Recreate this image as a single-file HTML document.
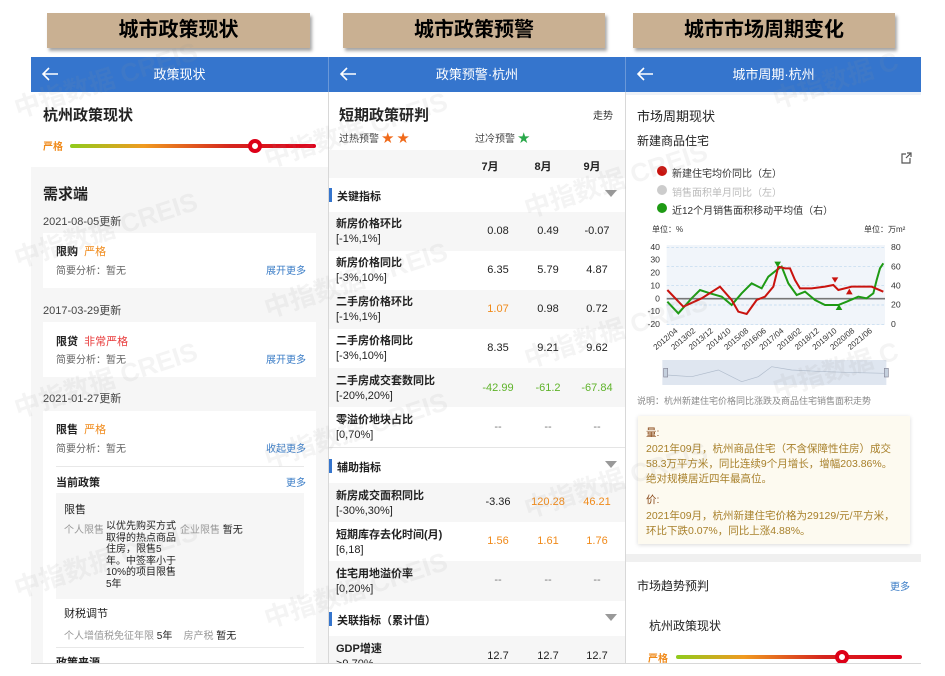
<!DOCTYPE html>
<html><head><meta charset="utf-8"><style>
*{margin:0;padding:0;box-sizing:border-box}
body{width:945px;height:676px;background:#fff;position:relative;overflow:hidden;font-family:"Liberation Sans","Noto Sans CJK SC",sans-serif;color:#222}
.a{position:absolute;white-space:nowrap}
.tag{position:absolute;top:13px;height:35px;background:#c9b092;box-shadow:2px 3px 3px rgba(0,0,0,.35);font-size:20px;font-weight:bold;text-align:center;line-height:35px;color:#000}
.hdr{position:absolute;top:57px;height:35px;background:#3575cd;color:#fff;font-size:13px;text-align:center;line-height:35px}
.arr{position:absolute;left:10px;top:9px}
.g{background:#f6f6f6}
.w{background:#fff}
.c{position:absolute;text-align:center;width:60px;font-size:11px}
.lab{position:absolute;left:7px;font-size:11px;line-height:15px;color:#222}
.lab b{font-weight:bold}
.sec{position:absolute;left:0;width:296px;height:34px;background:#fff}
.sec span{position:absolute;left:8px;top:10px;font-size:11px;font-weight:bold}
.sec i{position:absolute;left:0;top:10px;width:3px;height:14px;background:#3575cd}
.sec em{position:absolute;right:8px;top:12px;border-left:6px solid transparent;border-right:6px solid transparent;border-top:7px solid #999}
.wm{position:absolute;font-size:26px;font-weight:bold;color:rgba(150,150,150,.10);transform:rotate(-18deg);white-space:nowrap}
</style></head><body>

<div class="tag" style="left:47px;width:263px">城市政策现状</div>
<div class="tag" style="left:343px;width:262px">城市政策预警</div>
<div class="tag" style="left:633px;width:262px">城市市场周期变化</div>

<div class="a" style="left:31px;top:57px;width:890px;height:607px;border:1px solid #d8d8d8;border-top:none"></div>

<!-- LEFT PANEL -->
<div class="a" style="left:31px;top:92px;width:297px;height:571px;background:#f6f6f6;overflow:hidden">
  <div class="a" style="left:0;top:0;width:297px;height:75px;background:#fff"></div>
  <div class="a" style="left:12px;top:12px;font-size:15px;font-weight:bold">杭州政策现状</div>
  <div class="a" style="left:12px;top:46px;font-size:10px;color:#f08a1a;font-weight:bold">严格</div>
  <div class="a" style="left:39px;top:52px;width:246px;height:4px;border-radius:2px;background:linear-gradient(90deg,#8fcb1c,#f09a20 30%,#d5261e 65%,#e0001a)"></div>
  <div class="a" style="left:217px;top:47px;width:14px;height:14px;border-radius:50%;background:#fff;border:4px solid #dd0018"></div>
  <div class="a" style="left:12px;top:91px;font-size:15px;font-weight:bold">需求端</div>
  <div class="a" style="left:12px;top:121px;font-size:11px;color:#444">2021-08-05更新</div>
  <div class="a" style="left:12px;top:141px;width:273px;height:55px;background:#fff"></div>
  <div class="a" style="left:25px;top:151px;font-size:11px;font-weight:bold">限购 <span style="color:#f08a1a;font-weight:normal">&nbsp;严格</span></div>
  <div class="a" style="left:25px;top:170px;font-size:10px;color:#666">简要分析：暂无</div>
  <div class="a" style="left:235px;top:170px;font-size:10px;color:#3a7cc6">展开更多</div>
  <div class="a" style="left:12px;top:210px;font-size:11px;color:#444">2017-03-29更新</div>
  <div class="a" style="left:12px;top:230px;width:273px;height:55px;background:#fff"></div>
  <div class="a" style="left:25px;top:241px;font-size:11px;font-weight:bold">限贷 <span style="color:#e83a3a;font-weight:normal">&nbsp;非常严格</span></div>
  <div class="a" style="left:25px;top:259px;font-size:10px;color:#666">简要分析：暂无</div>
  <div class="a" style="left:235px;top:259px;font-size:10px;color:#3a7cc6">展开更多</div>
  <div class="a" style="left:12px;top:298px;font-size:11px;color:#444">2021-01-27更新</div>
  <div class="a" style="left:12px;top:319px;width:273px;height:260px;background:#fff"></div>
  <div class="a" style="left:25px;top:329px;font-size:11px;font-weight:bold">限售 <span style="color:#f08a1a;font-weight:normal">&nbsp;严格</span></div>
  <div class="a" style="left:25px;top:348px;font-size:10px;color:#666">简要分析：暂无</div>
  <div class="a" style="left:235px;top:348px;font-size:10px;color:#3a7cc6">收起更多</div>
  <div class="a" style="left:25px;top:374px;width:248px;height:1px;background:#e8e8e8"></div>
  <div class="a" style="left:25px;top:382px;font-size:11px;font-weight:bold">当前政策</div>
  <div class="a" style="left:255px;top:382px;font-size:10px;color:#3a7cc6">更多</div>
  <div class="a" style="left:25px;top:401px;width:248px;height:106px;background:#f6f6f6"></div>
  <div class="a" style="left:33px;top:409px;font-size:11px">限售</div>
  <div class="a" style="left:33px;top:429px;font-size:10px;color:#999">个人限售</div>
  <div class="a" style="left:75px;top:429px;font-size:10px;line-height:11.5px;color:#222;white-space:normal;width:72px">以优先购买方式取得的热点商品住房，限售5年。中签率小于10%的项目限售5年</div>
  <div class="a" style="left:149px;top:429px;font-size:10px;color:#999">企业限售 <span style="color:#222">暂无</span></div>
  <div class="a" style="left:33px;top:513px;font-size:11px">财税调节</div>
  <div class="a" style="left:33px;top:535px;font-size:10px;color:#999">个人增值税免征年限 <span style="color:#222">5年</span> &nbsp;&nbsp;&nbsp;房产税 <span style="color:#222">暂无</span></div>
  <div class="a" style="left:25px;top:555px;width:248px;height:1px;background:#e8e8e8"></div>
  <div class="a" style="left:25px;top:562px;font-size:11px;font-weight:bold">政策来源</div>
</div>
<div class="hdr" style="left:31px;width:297px">政策现状<svg class="arr" width="18" height="16" viewBox="0 0 18 16"><path d="M17 8H2M8 2L2 8L8 14" fill="none" stroke="#fff" stroke-width="1.6"/></svg></div>

<!-- MIDDLE PANEL -->
<div class="a" style="left:328px;top:92px;width:297px;height:571px;background:#fff;overflow:hidden;border-left:1px solid #d8d8d8">
  <div class="a" style="left:10px;top:12px;font-size:15px;font-weight:bold">短期政策研判</div>
  <div class="a" style="left:264px;top:15px;font-size:10px;color:#333">走势</div>
  <div class="a" style="left:10px;top:37px;font-size:10px;color:#444">过热预警 <span style="color:#f06a1a;font-size:12px">★ ★</span></div>
  <div class="a" style="left:146px;top:37px;font-size:10px;color:#444">过冷预警 <span style="color:#2aa84a;font-size:12px">★</span></div>
  <div class="a g" style="left:0;top:58px;width:297px;height:28px"></div>
  <div class="c" style="left:131px;top:66px;font-weight:bold">7月</div>
  <div class="c" style="left:184px;top:66px;font-weight:bold">8月</div>
  <div class="c" style="left:233px;top:66px;font-weight:bold">9月</div>
  <div class="sec" style="top:86px"><i></i><span>关键指标</span><em></em></div>

  <div class="a g" style="left:0;top:120px;width:297px;height:39px"></div>
  <div class="lab" style="top:125px"><b>新房价格环比</b><br>[-1%,1%]</div>
  <div class="c" style="left:139px;top:133px">0.08</div><div class="c" style="left:189px;top:133px">0.49</div><div class="c" style="left:238px;top:133px">-0.07</div>

  <div class="a w" style="left:0;top:159px;width:297px;height:39px"></div>
  <div class="lab" style="top:164px"><b>新房价格同比</b><br>[-3%,10%]</div>
  <div class="c" style="left:139px;top:172px">6.35</div><div class="c" style="left:189px;top:172px">5.79</div><div class="c" style="left:238px;top:172px">4.87</div>

  <div class="a g" style="left:0;top:198px;width:297px;height:39px"></div>
  <div class="lab" style="top:203px"><b>二手房价格环比</b><br>[-1%,1%]</div>
  <div class="c" style="left:139px;top:211px;color:#f08a1a">1.07</div><div class="c" style="left:189px;top:211px">0.98</div><div class="c" style="left:238px;top:211px">0.72</div>

  <div class="a w" style="left:0;top:237px;width:297px;height:39px"></div>
  <div class="lab" style="top:242px"><b>二手房价格同比</b><br>[-3%,10%]</div>
  <div class="c" style="left:139px;top:250px">8.35</div><div class="c" style="left:189px;top:250px">9.21</div><div class="c" style="left:238px;top:250px">9.62</div>

  <div class="a g" style="left:0;top:276px;width:297px;height:39px"></div>
  <div class="lab" style="top:282px"><b>二手房成交套数同比</b><br>[-20%,20%]</div>
  <div class="c" style="left:139px;top:290px;color:#5fb32a">-42.99</div><div class="c" style="left:189px;top:290px;color:#5fb32a">-61.2</div><div class="c" style="left:238px;top:290px;color:#5fb32a">-67.84</div>

  <div class="a w" style="left:0;top:315px;width:297px;height:40px"></div>
  <div class="lab" style="top:321px"><b>零溢价地块占比</b><br>[0,70%]</div>
  <div class="c" style="left:139px;top:329px;color:#777">--</div><div class="c" style="left:189px;top:329px;color:#777">--</div><div class="c" style="left:238px;top:329px;color:#777">--</div>
  <div class="a" style="left:0;top:355px;width:297px;height:1px;background:#e5e5e5"></div>

  <div class="sec" style="top:357px"><i></i><span>辅助指标</span><em></em></div>

  <div class="a g" style="left:0;top:391px;width:297px;height:39px"></div>
  <div class="lab" style="top:397px"><b>新房成交面积同比</b><br>[-30%,30%]</div>
  <div class="c" style="left:139px;top:404px">-3.36</div><div class="c" style="left:189px;top:404px;color:#f08a1a">120.28</div><div class="c" style="left:238px;top:404px;color:#f08a1a">46.21</div>

  <div class="a w" style="left:0;top:430px;width:297px;height:39px"></div>
  <div class="lab" style="top:436px"><b>短期库存去化时间(月)</b><br>[6,18]</div>
  <div class="c" style="left:139px;top:443px;color:#f08a1a">1.56</div><div class="c" style="left:189px;top:443px;color:#f08a1a">1.61</div><div class="c" style="left:238px;top:443px;color:#f08a1a">1.76</div>

  <div class="a g" style="left:0;top:469px;width:297px;height:40px"></div>
  <div class="lab" style="top:475px"><b>住宅用地溢价率</b><br>[0,20%]</div>
  <div class="c" style="left:139px;top:482px;color:#777">--</div><div class="c" style="left:189px;top:482px;color:#777">--</div><div class="c" style="left:238px;top:482px;color:#777">--</div>

  <div class="sec" style="top:510px"><i></i><span>关联指标（累计值）</span><em></em></div>
  <div class="a g" style="left:0;top:544px;width:297px;height:40px"></div>
  <div class="lab" style="top:550px"><b>GDP增速</b><br>&gt;9.70%</div>
  <div class="c" style="left:139px;top:558px">12.7</div><div class="c" style="left:189px;top:558px">12.7</div><div class="c" style="left:238px;top:558px">12.7</div>
</div>
<div class="hdr" style="left:328px;width:297px;border-left:1px solid #6a98d8">政策预警·杭州<svg class="arr" width="18" height="16" viewBox="0 0 18 16"><path d="M17 8H2M8 2L2 8L8 14" fill="none" stroke="#fff" stroke-width="1.6"/></svg></div>

<!-- RIGHT PANEL -->
<div class="a" style="left:625px;top:92px;width:296px;height:571px;background:#fff;overflow:hidden;border-left:1px solid #d8d8d8">
  <div class="a" style="left:0;top:0;width:296px;height:3px;background:#eef2f8"></div>
  <div class="a" style="left:11px;top:14px;font-size:13px">市场周期现状</div>
  <div class="a" style="left:11px;top:40px;font-size:12px">新建商品住宅</div>
  <svg class="a" style="left:274px;top:60px" width="12" height="12" viewBox="0 0 12 12"><path d="M6 2H2V11H10V6M7 1H11V5M11 1L6 6" fill="none" stroke="#555" stroke-width="1.2"/></svg>
  <div class="a" style="left:31px;top:74px;width:10px;height:10px;border-radius:50%;background:#c9130e"></div>
  <div class="a" style="left:46px;top:73px;font-size:10px;color:#333">新建住宅均价同比（左）</div>
  <div class="a" style="left:31px;top:93px;width:10px;height:10px;border-radius:50%;background:#ccc"></div>
  <div class="a" style="left:46px;top:92px;font-size:10px;color:#bbb">销售面积单月同比（左）</div>
  <div class="a" style="left:31px;top:111px;width:10px;height:10px;border-radius:50%;background:#1e9a14"></div>
  <div class="a" style="left:46px;top:110px;font-size:10px;color:#333">近12个月销售面积移动平均值（右）</div>
  <div class="a" style="left:26px;top:132px;font-size:8px;color:#333">单位：%</div>
  <div class="a" style="left:238px;top:132px;font-size:8px;color:#333">单位：万m²</div>
  <div class="a" style="left:11px;top:302px;font-size:9px;color:#888">说明：杭州新建住宅价格同比涨跌及商品住宅销售面积走势</div>
  <div class="a" style="left:12px;top:324px;width:272px;height:128px;background:#fdfaf0;box-shadow:0 1px 4px rgba(0,0,0,.15)"></div>
  <div class="a" style="left:20px;top:333px;font-size:10.5px;color:#8a4a1a">量:</div>
  <div class="a" style="left:20px;top:350px;width:255px;font-size:10.5px;line-height:15px;color:#a8802a;white-space:normal">2021年09月，杭州商品住宅（不含保障性住房）成交58.3万平方米，同比连续9个月增长，增幅203.86%。绝对规模居近四年最高位。</div>
  <div class="a" style="left:20px;top:400px;font-size:10.5px;color:#8a4a1a">价:</div>
  <div class="a" style="left:20px;top:417px;width:255px;font-size:10.5px;line-height:15px;color:#a8802a;white-space:normal">2021年09月，杭州新建住宅价格为29129/元/平方米，环比下跌0.07%，同比上涨4.88%。</div>
  <div class="a" style="left:0;top:462px;width:296px;height:8px;background:#f0f0f0"></div>
  <div class="a" style="left:11px;top:485px;font-size:12px">市场趋势预判</div>
  <div class="a" style="left:264px;top:486px;font-size:10px;color:#3a7cc6">更多</div>
  <div class="a" style="left:23px;top:525px;font-size:12px">杭州政策现状</div>
  <div class="a" style="left:22px;top:558px;font-size:10px;color:#f08a1a;font-weight:bold">严格</div>
  <div class="a" style="left:50px;top:563px;width:226px;height:4px;border-radius:2px;background:linear-gradient(90deg,#8fcb1c,#f09a20 30%,#d5261e 65%,#e0001a)"></div>
  <div class="a" style="left:209px;top:558px;width:14px;height:14px;border-radius:50%;background:#fff;border:4px solid #dd0018"></div>
</div>
<div class="hdr" style="left:625px;width:296px;border-left:1px solid #6a98d8">城市周期·杭州<svg class="arr" width="18" height="16" viewBox="0 0 18 16"><path d="M17 8H2M8 2L2 8L8 14" fill="none" stroke="#fff" stroke-width="1.6"/></svg></div>

<!-- chart -->
<svg class="a" style="left:625px;top:60px" width="300" height="340" viewBox="0 0 900 1020">
  <rect x="125" y="555" width="655" height="240" fill="#f1f5fa"/>
  <g stroke="#bcd6ee" stroke-width="2" stroke-dasharray="8 6">
    <line x1="125" y1="562" x2="780" y2="562"/><line x1="125" y1="620" x2="780" y2="620"/><line x1="125" y1="677" x2="780" y2="677"/><line x1="125" y1="735" x2="780" y2="735"/><line x1="125" y1="793" x2="780" y2="793"/>
  </g>
  <line x1="125" y1="716" x2="780" y2="716" stroke="#777" stroke-width="5"/>
  <g font-size="26" fill="#333" font-family="Liberation Sans,sans-serif" text-anchor="end">
    <text x="105" y="570">40</text><text x="105" y="608">30</text><text x="105" y="647">20</text><text x="105" y="685">10</text><text x="105" y="724">0</text><text x="105" y="762">-10</text><text x="105" y="801">-20</text>
  </g>
  <g font-size="26" fill="#333" font-family="Liberation Sans,sans-serif">
    <text x="798" y="570">80</text><text x="798" y="628">60</text><text x="798" y="685">40</text><text x="798" y="743">20</text><text x="798" y="801">0</text>
  </g>
  <g font-size="24" fill="#333" font-family="Liberation Sans,sans-serif" text-anchor="end">
    <text transform="translate(160,815) rotate(-40)">2012/04</text>
    <text transform="translate(213,815) rotate(-40)">2013/02</text>
    <text transform="translate(266,815) rotate(-40)">2013/12</text>
    <text transform="translate(319,815) rotate(-40)">2014/10</text>
    <text transform="translate(372,815) rotate(-40)">2015/08</text>
    <text transform="translate(425,815) rotate(-40)">2016/06</text>
    <text transform="translate(478,815) rotate(-40)">2017/04</text>
    <text transform="translate(531,815) rotate(-40)">2018/02</text>
    <text transform="translate(584,815) rotate(-40)">2018/12</text>
    <text transform="translate(637,815) rotate(-40)">2019/10</text>
    <text transform="translate(690,815) rotate(-40)">2020/08</text>
    <text transform="translate(743,815) rotate(-40)">2021/06</text>
  </g>
  <polyline fill="none" stroke="#1e9a14" stroke-width="6" points="127,725 160,760 200,715 225,690 255,700 290,710 320,735 350,700 380,670 410,685 430,650 455,630 470,620 490,670 515,705 540,695 570,720 600,735 640,735 665,725 700,710 725,715 745,700 755,660 765,625 775,610"/>
  <polyline fill="none" stroke="#c9130e" stroke-width="6" points="127,690 175,740 230,715 285,680 320,720 340,755 365,762 395,720 420,710 445,680 460,620 480,625 495,625 510,660 525,685 560,685 600,680 625,675 640,690 680,680 720,680 740,680 775,695"/>
  <path d="M448 605 L468 605 L458 622Z" fill="#1e9a14"/>
  <path d="M632 750 L652 750 L642 733Z" fill="#1e9a14"/>
  <path d="M620 652 L640 652 L630 668Z" fill="#c9130e"/>
  <path d="M663 703 L683 703 L673 686Z" fill="#c9130e"/>
  <rect x="112" y="900" width="672" height="75" fill="#dfe6f0"/>
  <polyline fill="none" stroke="#b0bccc" stroke-width="2" points="125,945 200,950 280,930 350,965 400,950 440,920 500,930 600,935 700,938 780,940"/>
  <rect x="116" y="925" width="12" height="26" fill="#c5d0de" stroke="#889" stroke-width="2"/>
  <rect x="778" y="925" width="12" height="26" fill="#c5d0de" stroke="#889" stroke-width="2"/>
</svg>

<div class="wm" style="left:10px;top:60px">中指数据 CREIS</div>
<div class="wm" style="left:10px;top:210px">中指数据 CREIS</div>
<div class="wm" style="left:10px;top:360px">中指数据 CREIS</div>
<div class="wm" style="left:10px;top:540px">中指数据 CREIS</div>
<div class="wm" style="left:260px;top:110px">中指数据 CREIS</div>
<div class="wm" style="left:260px;top:260px">中指数据 CREIS</div>
<div class="wm" style="left:260px;top:410px">中指数据 CREIS</div>
<div class="wm" style="left:260px;top:570px">中指数据 CREIS</div>
<div class="wm" style="left:520px;top:160px">中指数据 CREIS</div>
<div class="wm" style="left:520px;top:310px">中指数据 CREIS</div>
<div class="wm" style="left:520px;top:460px">中指数据 CREIS</div>
<div class="wm" style="left:770px;top:60px">中指数据 C</div>
<div class="wm" style="left:770px;top:350px">中指数据 C</div>
</body></html>
